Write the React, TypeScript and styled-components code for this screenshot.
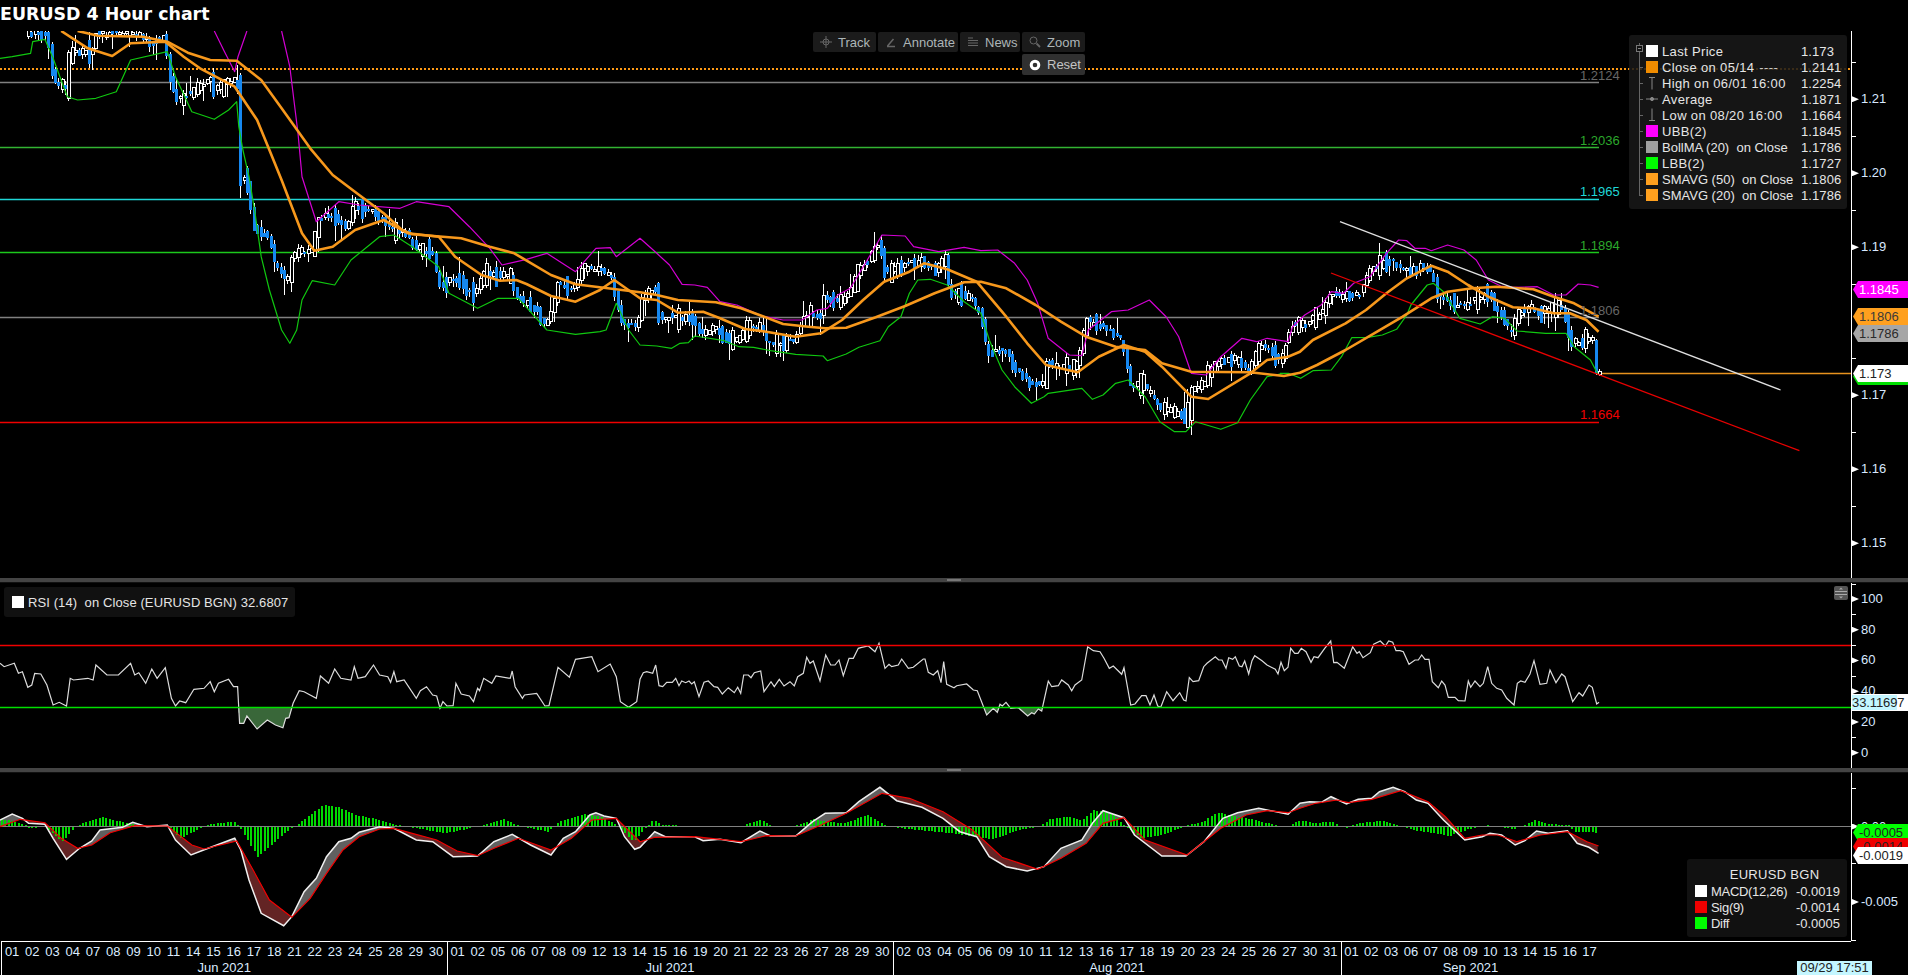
import React from 'react'
import styled, { createGlobalStyle } from 'styled-components'

type Pt = [number, number]

const PANEL_W = 1851
const MAIN_TOP = 31, MAIN_H = 547
const RSI_TOP = 583, RSI_H = 185
const MACD_TOP = 773, MACD_H = 168

// points were read off the picture, each group in its own scale
const trace = (x0: number, sx: number, y0: number, flat: number[]): Pt[] => {
  const out: Pt[] = []
  for (let i = 0; i < flat.length; i += 2) out.push([x0 + flat[i] / sx, y0 + flat[i + 1] / 3])
  return out
}
const at = (pts: Pt[], x: number) => {
  if (x <= pts[0][0]) return pts[0][1]
  for (let i = 1; i < pts.length; i++) {
    if (x <= pts[i][0]) {
      const [ax, ay] = pts[i - 1]
      const [bx, by] = pts[i]
      return bx === ax ? by : ay + ((by - ay) * (x - ax)) / (bx - ax)
    }
  }
  return pts[pts.length - 1][1]
}
const toPath = (pts: Pt[]) => pts.map((p, i) => (i ? 'L' : 'M') + p[0].toFixed(1) + ' ' + p[1].toFixed(1)).join('')
const snap = (y: number) => Math.round(y) + 0.5

const sma20: Pt[] = [
  ...trace(0, 2.45, 0, [150,93,215,145,275,168,320,130,405,125,450,170,490,205,575,260,630,360,660,450,690,540,740,700,770,752,815,740,870,690,940,660,1000,700,1075,710,1115,770,1180,825,1225,842,1265,840,1290,852,1350,888,1410,905,1470,870,1505,840]),
  ...trace(640, 2.376, 230, [0,205,40,210,90,248,150,245,190,265,250,297,300,305,370,320,430,310,480,270,530,210,580,155,640,125,675,100,730,118,800,155,870,260,920,340,965,405,1040,427,1090,380,1150,345,1200,365,1240,410,1310,500,1350,507,1450,430,1490,390,1540,380,1568,365]),
  ...trace(1268, 2.45, 250, [110,270,190,220,240,180,290,130,340,85,400,47,440,65,490,105,540,140,600,172,650,175,700,190,740,190,780,210,810,245]),
]
const sma50: Pt[] = [
  ...trace(0, 2.45, 0, [190,93,240,107,350,110,410,125,460,158,515,180,580,182,640,240,690,325,760,445,815,525,880,585,940,640,985,690,1010,703,1130,715,1200,740,1260,760,1350,825,1410,853]),
  ...trace(640, 2.376, 230, [0,187,40,195,90,210,180,217,240,235,290,258,340,282,400,290,440,295,490,293,560,262,630,228,700,190,770,157,810,155,870,175,940,225,1000,275,1060,320,1130,350,1200,360,1240,400,1310,425,1450,427,1530,438,1568,428]),
  ...trace(1268, 2.45, 250, [120,345,190,300,260,250,330,200,400,145,440,125,500,115,560,110,650,118,700,140,750,160,810,200]),
]
const ubbHead = trace(0, 2.45, 0, [525,93,550,155,575,215,583,170,605,93])
const ubb: Pt[] = [
  ...trace(0, 2.45, 0, [690,93,710,200,730,400,740,530,775,665,830,605,880,615,980,625,1020,605,1100,620,1150,680,1200,745,1230,795,1290,778,1340,760,1410,815,1460,745,1495,743,1510,770]),
  ...trace(640, 2.376, 230, [0,25,40,70,70,105,100,163,130,165,160,172,190,215,230,225,290,258,340,270,385,270,420,240,445,235,470,195,500,175,540,90,575,15,630,18,650,50,710,65,770,52,810,62,850,60,890,100,920,150,945,220,970,325,1020,375,1050,377,1065,300,1120,245,1160,240,1210,210,1250,260,1280,320,1310,430,1345,435,1380,380,1430,325,1465,335,1490,325,1540,335]),
  ...trace(1268, 2.45, 0, [60,980,90,945,130,915,155,875,185,880,210,850,250,830,290,760,320,720,340,722,360,745,385,745,400,752,440,735,480,750,510,780,540,840,570,858,600,862,660,860,700,885,730,885,760,852,790,855,810,862]),
]
const lbb: Pt[] = [
  ...trace(0, 2.45, 0, [0,175,30,170,75,160,80,125,110,118,130,175,165,290,190,300,235,295,285,275,320,180,410,155,430,230,470,335,525,358,560,330,580,305,585,380,595,450,610,530,625,640,640,770,660,870,690,990,710,1030,727,990,740,900,765,842,820,855,860,780,930,710,965,705,1010,740,1075,800,1100,880,1170,925,1220,895,1270,895,1340,990,1410,1003,1470,995,1485,990,1510,910,1540,990,1568,1035]),
  ...trace(640, 2.376, 230, [40,348,75,355,95,340,115,338,130,318,200,332,235,350,270,352,310,362,370,373,435,378,445,392,490,372,520,352,570,332,590,290,620,260,640,190,660,150,690,148,730,165,770,215,810,250,830,330,860,420,890,470,930,520,960,500,970,490,1050,475,1075,508,1100,495,1130,460,1160,450,1200,500,1235,575,1270,605,1297,605,1320,575,1380,598,1420,578,1450,510,1490,440,1530,430]),
  ...trace(1268, 2.45, 250, [30,370,50,370,80,385,110,362,155,360,180,320,205,263,245,262,280,255,315,238,340,195,350,165,390,105,405,100,430,125,440,145,470,205,520,222,550,200,580,205,610,243,680,250,730,250,750,290,790,330,808,372]),
]
const price: Pt[] = [
  ...trace(0, 2.45, 0, [65,100,120,105,135,240,170,270,175,155,230,155,235,105,330,100,375,130,405,110,420,230,435,300,470,280,520,240,530,270,575,240,587,260,590,530,610,540,625,680,665,720,680,800,710,840,720,760,770,750,785,660,820,640,850,690,870,620,915,630,960,690,1000,700,1020,740,1065,760,1080,860,1120,840,1165,880,1190,820,1255,830,1270,890,1320,930,1340,980,1360,915,1370,850,1410,870,1430,800,1500,820,1530,980]),
  ...trace(640, 2.376, 230, [0,280,10,200,40,170,50,260,90,260,130,265,150,320,180,290,210,330,240,330,250,300,290,290,310,340,370,330,395,260,440,260,440,200,480,220,500,190,520,130,550,85,570,40,590,130,640,100,680,95,710,120,730,80,740,190,790,200,815,260,830,370,880,365,890,410,930,460,965,460,970,400,1040,415,1065,270,1100,290,1150,330,1170,470,1200,460,1240,530,1305,565,1310,490,1340,460,1370,400,1420,390,1450,420,1480,340,1530,390,1550,280]),
  ...trace(1268, 2.45, 250, [60,230,100,220,135,190,160,130,205,140,230,130,255,60,300,30,350,70,380,50,400,60,415,120,450,160,490,170,510,150,540,130,570,180,600,250,615,190,650,170,665,200,700,170,730,180,745,280,790,270]),
]

const rsi: Pt[] = [
  ...trace(0, 2.45, 570, [0,280,10,290,35,280,45,310,55,305,68,352,78,345,85,310,100,312,115,345,130,405,145,397,163,408,172,325,180,330,215,325,228,330,235,285,262,315,290,315,320,280,330,315,340,308,357,340,372,297,385,325,405,293,420,385,430,408,440,393,455,398,475,358,500,355,515,335,525,365,535,340,560,328,572,350,582,350,587,460,597,460,605,438,630,477,655,450,675,465,693,473,700,445,708,443,718,400,733,362,745,365,775,385,785,318,805,340,820,297,835,325,860,330,868,290,877,325,895,320,915,285,930,315,950,320,957,337,965,305,972,335,990,330,1020,385,1030,362,1045,350,1060,375,1070,378,1078,415,1085,395,1095,408,1110,407,1117,340,1130,372,1150,378,1160,395,1170,355,1175,362,1185,325,1205,340,1215,318,1250,325,1255,303,1262,350,1280,385,1285,375,1315,370,1335,408,1345,407,1367,292,1395,322,1410,268,1450,260,1465,305,1495,282,1510,320,1520,395,1540,412,1560,395]),
  ...trace(640, 3, 630, [0,148,10,128,20,125,38,130,47,105,57,167,68,170,80,157,97,157,107,145,117,167,125,153,137,158,147,153,155,162,163,155,177,200,192,157,205,153,222,170,233,172,247,192,265,173,283,188,293,172,302,190,311,135,325,135,333,143,343,128,362,123,372,185,393,155,403,170,418,148,432,168,450,155,463,168,473,140,490,130,500,82,510,100,520,93,540,153,557,75,572,105,585,105,597,90,610,137,627,85,640,85,655,55,665,52,685,48,705,65,717,40,735,115,747,103,755,110,775,105,785,87,805,115,820,112,850,87,855,87,865,127,880,135,893,122,903,158,911,95,920,163,942,173,950,167,980,162,1000,180,1012,182,1040,255,1060,235,1072,247,1080,223,1087,228,1098,217,1112,235,1135,233,1163,258,1175,248,1183,252,1195,237,1205,243,1225,153,1235,170,1255,167,1265,150,1285,165,1295,182,1305,165,1325,150,1343,50,1360,62,1380,65,1392,85,1408,115,1420,108,1445,133,1452,113,1472,225,1485,222,1505,197,1518,197,1530,225,1542,195,1553,228,1562,232]),
  ...trace(1162, 3, 630, [0,222,14,185,33,212,53,188,65,210,72,213,82,143,93,155,110,152,125,110,135,100,160,80,170,90,180,90,192,115,200,83,212,88,220,80,232,108,240,110,248,93,260,132,270,92,278,77,300,92,315,105,340,118,348,132,357,97,367,122,378,112,386,55,398,70,408,70,418,55,432,65,447,97,456,80,468,83,488,55,506,33,515,98,525,97,547,115,572,50,585,70,592,65,603,83,625,68,635,43,655,33,670,48,680,33,692,37,702,62]),
  ...trace(1400, 3, 570, [0,242,10,245,27,283,45,270,55,270,65,255,75,268,87,268,97,335,115,353,125,333,135,345,145,382,165,382,175,392,195,393,205,333,212,352,225,333,240,350,250,340,263,290,275,340,290,355,305,360,320,385,342,405,352,340,362,333,375,337,390,312,402,272,420,343,440,340,450,300,468,338,485,312,495,320,518,395,537,368,548,378,567,345,577,352,590,402,597,397]),
]

const macd: Pt[] = [
  ...trace(0, 2.45, 770, [0,150,30,132,55,145,70,160,110,163,130,205,163,268,195,235,225,213,245,180,300,172,325,157,360,170,410,165,430,210,468,255,510,235,575,205,590,240,610,330,640,430,695,467,715,440,745,365,775,325,800,260,830,215,860,205,880,187,930,170,965,175,1020,210,1060,215,1110,260,1170,258,1210,215,1255,193,1300,225,1350,255,1380,205,1410,185,1445,135,1460,128,1480,138,1510,145,1530,200,1555,238]),
  ...trace(640, 2.376, 770, [0,232,35,185,60,200,130,200,150,212,190,208,240,218,285,183,310,198,370,198,410,155,440,130,490,128,520,95,570,52,610,92,670,112,720,145,760,185,800,200,830,260,870,290,920,303,960,290,1000,235,1050,210,1075,160,1100,122,1150,143,1175,195,1240,258,1297,258,1340,215,1385,145,1420,128,1470,115,1540,133]),
  ...trace(1300, 2.579, 770, [0,100,25,95,55,97,80,80,120,102,150,88,185,85,205,65,240,52,270,65,300,90,330,100,370,150,425,210,470,200,490,190,520,195,555,225,580,212,610,183,640,190,690,182,715,220,745,232,770,250]),
]
const signal: Pt[] = [
  ...trace(0, 2.45, 770, [0,170,50,148,110,158,150,205,190,235,225,225,270,188,330,167,410,168,470,225,500,237,580,213,620,300,660,390,715,442,760,385,800,310,840,240,880,200,930,177,965,175,1010,190,1070,210,1120,243,1170,257,1210,235,1270,205,1350,240,1400,205,1450,150,1510,145]),
  ...trace(640, 2.376, 770, [0,215,35,202,130,200,240,215,300,197,370,198,430,165,490,130,575,70,640,85,720,125,790,180,860,262,945,298,1000,265,1060,220,1100,160,1150,143,1200,210,1300,255,1380,175,1440,135,1490,122,1540,128]),
  ...trace(1300, 2.579, 770, [0,115,40,100,95,90,125,98,185,88,260,62,330,95,375,140,425,205,470,195,510,195,560,215,590,205,620,195,690,185,740,215,770,228]),
]
const hist: Pt[] = [
  ...trace(0, 2.45, 770, [0,145,30,155,60,165,70,175,110,170,150,215,180,175,200,160,250,142,300,157,350,167,410,168,440,205,490,175,510,162,570,155,585,170,630,260,700,185,725,165,790,105,830,112,870,135,930,150,970,165,1090,190,1160,172,1180,165,1230,147,1270,168,1340,185,1370,155,1430,132,1470,140,1510,165,1550,215]),
  ...trace(640, 2.376, 770, [0,190,30,150,50,165,130,168,240,168,285,150,310,167,370,167,410,148,440,155,480,160,540,135,580,165,600,172,660,180,740,190,835,208,900,180,950,170,970,148,1010,140,1050,150,1075,120,1120,130,1150,168,1190,205,1240,195,1290,170,1340,152,1370,128,1420,140,1470,153,1530,173]),
  ...trace(1300, 2.579, 770, [0,150,30,160,80,155,105,170,120,175,145,160,210,152,260,168,300,182,385,198,430,178,480,165,550,178,605,150,640,162,690,165,710,187,735,187,770,188]),
]

const seeded = (seed: number) => () => {
  seed = (seed + 0x6d2b79f5) | 0
  let t = Math.imul(seed ^ (seed >>> 15), 1 | seed)
  t = (t + Math.imul(t ^ (t >>> 7), 61 | t)) ^ t
  return ((t ^ (t >>> 14)) >>> 0) / 4294967296
}

interface Candle { x: number; top: number; bottom: number; hi: number; lo: number; down: boolean }

const buildCandles = (): Candle[] => {
  const rnd = seeded(2021)
  const out: Candle[] = []
  const step = 3.37
  for (let x = 27; x < 1592; x += step) {
    const a = at(price, x) + (rnd() - 0.5) * 6
    const b = at(price, x + step) + (rnd() - 0.5) * 6
    const pad = rnd() < 0.3 ? rnd() * 10 : rnd() * 2
    const top = Math.min(a, b) - pad
    const bottom = Math.max(a, b) + pad
    const up = rnd() < 0.2 ? 16 : 5
    const dn = rnd() < 0.2 ? 16 : 5
    out.push({ x, top, bottom: Math.max(bottom, top + 2), hi: top - rnd() * up, lo: bottom + rnd() * dn, down: b > a })
  }
  out.push({ x: 1594.5, top: 340, bottom: 374, hi: 339, lo: 375, down: true })
  out.push({ x: 1598, top: 371, bottom: 374, hi: 369, lo: 376, down: false })
  return out
}

const priceY = (p: number) => 247.3 + (1.19 - p) * 7400
const rsiY = (v: number) => 752.7 - v * 1.537
const ZERO_Y = 826.5

const GlobalStyle = createGlobalStyle`
  html, body {
    margin: 0;
    background: #000;
    font-family: "Liberation Sans", Arial, sans-serif;
    font-size: 13px;
    overflow: hidden;
  }
`
const Page = styled.div`
  width: 1908px;
  height: 975px;
  display: flex;
  flex-direction: column;
  background: #000;
  overflow: hidden;
`
const Title = styled.h1`
  margin: 0;
  height: 31px;
  flex: none;
  font: bold 17.4px/28px "DejaVu Sans", sans-serif;
  color: #fff;
  white-space: nowrap;
`
const Panel = styled.section<{ $h: number }>`
  display: flex;
  flex: none;
  height: ${p => p.$h}px;
`
const Plot = styled.div`
  position: relative;
  width: ${PANEL_W}px;
  flex: none;
  height: 100%;
`
const Drawing = styled.svg`
  display: block;
  width: 100%;
  height: 100%;
`
const Separator = styled.div`
  flex: none;
  height: 5px;
  background: #444;
  display: flex;
  justify-content: center;
  align-items: center;
  border-bottom: 1px solid #111;
  box-sizing: border-box;
`
const Grip = styled.span`
  display: block;
  width: 14px;
  height: 2px;
  background: #777;
`

const AxisColumn = styled.div`
  position: relative;
  flex: 1;
  border-left: 1px solid #fff;
  color: #d8e8ff;
`
const MajorTick = styled.i`
  position: absolute;
  left: 0;
  width: 7px;
  height: 6px;
  margin-top: -3px;
  background: #fff;
  clip-path: polygon(0 0, 100% 50%, 0 100%);
`
const MinorTick = styled.i`
  position: absolute;
  left: 0;
  width: 4px;
  height: 1px;
  background: #fff;
`
const AxisLabel = styled.span`
  position: absolute;
  left: 9px;
  height: 16px;
  margin-top: -8px;
  line-height: 16px;
  white-space: nowrap;
`
const Tag = styled.div<{ $bg: string; $fg: string }>`
  position: absolute;
  left: 1px;
  width: 55px;
  height: 17px;
  box-sizing: border-box;
  padding-left: 6px;
  line-height: 17px;
  background: ${p => p.$bg};
  color: ${p => p.$fg};
  white-space: nowrap;
  overflow: hidden;
  clip-path: polygon(5px 0, 100% 0, 100% 100%, 5px 100%, 0 50%);
`
const RsiTag = styled.div`
  position: absolute;
  left: 0;
  width: 56px;
  height: 17px;
  background: #fff;
  color: #222;
  line-height: 17px;
  white-space: nowrap;
  overflow: hidden;
`
const Highlight = styled.span`
  background: #c4f6ff;
  letter-spacing: -0.1px;
`

const LevelText = styled.span<{ $color: string }>`
  position: absolute;
  left: 1580px;
  width: 39px;
  height: 14px;
  margin-top: -7px;
  line-height: 14px;
  text-align: right;
  color: ${p => p.$color};
`

const Toolbar = styled.div`
  position: absolute;
  left: 813px;
  top: 1px;
  display: flex;
  flex-direction: column;
  align-items: flex-end;
  gap: 2px;
`
const ToolRow = styled.div`
  display: flex;
  gap: 2px;
`
const ToolButton = styled.div<{ $w: number; $active?: boolean }>`
  display: flex;
  align-items: center;
  gap: 6px;
  box-sizing: border-box;
  width: ${p => p.$w}px;
  height: ${p => (p.$active ? 21 : 20)}px;
  padding-left: 7px;
  border-radius: 2px;
  background: ${p => (p.$active ? '#303030' : '#1b1b1b')};
  color: ${p => (p.$active ? '#c4c4c4' : '#adb6b8')};
  white-space: nowrap;
`

const Legend = styled.div`
  position: absolute;
  top: 4px;
  right: 4px;
  width: 218px;
  height: 174px;
  box-sizing: border-box;
  padding-top: 8px;
  border-radius: 3px;
  background: rgba(24, 24, 24, 0.86);
  color: #e6e6e6;
`
const LegendRow = styled.div`
  display: flex;
  align-items: center;
  height: 16px;
`
const TreeCell = styled.span<{ $last?: boolean }>`
  position: relative;
  align-self: stretch;
  width: 17px;
  flex: none;
  &::before {
    content: '';
    position: absolute;
    left: 10px;
    top: 0;
    height: ${p => (p.$last ? 8 : 16)}px;
    width: 1px;
    background: #666;
  }
  &::after {
    content: '';
    position: absolute;
    left: 10px;
    top: 8px;
    width: 4px;
    height: 1px;
    background: #666;
  }
`
const TreeBox = styled.span`
  position: absolute;
  z-index: 1;
  left: 7px;
  top: 2px;
  width: 5px;
  height: 5px;
  border: 1px solid #777;
  background: #111;
  display: flex;
  align-items: center;
  justify-content: center;
  &::after {
    content: '';
    width: 3px;
    height: 1px;
    background: #888;
  }
`
const Swatch = styled.span<{ $color: string }>`
  display: block;
  flex: none;
  width: 12px;
  height: 12px;
  background: ${p => p.$color};
`
const SeriesName = styled.span<{ $tight: boolean }>`
  flex: none;
  width: 139px;
  margin-left: 4px;
  letter-spacing: ${p => (p.$tight ? 0 : 0.35)}px;
  white-space: pre;
`
const SeriesValue = styled.span`
  letter-spacing: 0.1px;
`
const Dashes = styled.span`
  color: #c8c8c8;
  margin-left: 5px;
`
const GlyphBox = styled.svg`
  display: block;
  flex: none;
  width: 12px;
  height: 14px;
`

const RsiLegend = styled.div`
  position: absolute;
  left: 4px;
  top: 4px;
  width: 291px;
  height: 30px;
  display: flex;
  align-items: center;
  gap: 4px;
  box-sizing: border-box;
  padding-left: 8px;
  border-radius: 3px;
  background: #111;
  color: #e4e4e4;
  letter-spacing: 0.1px;
  white-space: pre;
`
const CollapseButton = styled.div`
  position: absolute;
  right: 3px;
  top: 3px;
  width: 14px;
  height: 14px;
  border-radius: 2px;
  background: #555;
`

const MacdLegend = styled.div`
  position: absolute;
  right: 4px;
  top: 86px;
  width: 160px;
  height: 78px;
  box-sizing: border-box;
  padding: 8px 7px 0 8px;
  border-radius: 3px;
  background: #111;
  color: #e6e6e6;
`
const MacdTitle = styled.div`
  height: 16px;
  line-height: 16px;
  text-align: center;
  padding-left: 14px;
  letter-spacing: 0.3px;
`
const MacdRow = styled.div`
  display: flex;
  align-items: center;
  height: 16px;
`
const MacdName = styled.span`
  margin-left: 4px;
  flex: 1;
  letter-spacing: -0.3px;
`

const DateStrip = styled.div`
  position: relative;
  flex: none;
  height: 34px;
  color: #dcecff;
`
const Months = styled.div`
  display: flex;
  width: ${PANEL_W - 1}px;
  height: 100%;
  box-sizing: border-box;
  margin-left: 1px;
  border-top: 1px solid #fff;
`
const Month = styled.div<{ $w: number }>`
  flex: none;
  box-sizing: border-box;
  width: ${p => p.$w}px;
  border-left: 1px solid #fff;
`
const MonthInner = styled.div<{ $w?: number }>`
  width: ${p => (p.$w ? p.$w + 'px' : '100%')};
`
const Days = styled.div`
  display: flex;
  justify-content: space-around;
  height: 19px;
  line-height: 19px;
`
const MonthName = styled.div`
  height: 14px;
  line-height: 14px;
  text-align: center;
`
const Stamp = styled.div`
  position: absolute;
  right: 36px;
  bottom: 0;
  width: 75px;
  height: 14px;
  line-height: 14px;
  text-align: center;
  background: #c4f6ff;
  color: #222;
`

interface AxisProps {
  top: number
  major: { y: number; label: string }[]
  minor: number[]
  children?: React.ReactNode
}
const Axis: React.FC<AxisProps> = ({ top, major, minor, children }) => (
  <AxisColumn>
    {minor.map(y => <MinorTick key={y} style={{ top: y - top }} />)}
    {major.map(m => (
      <React.Fragment key={m.label}>
        <MajorTick style={{ top: m.y - top }} />
        <AxisLabel style={{ top: m.y - top }}>{m.label}</AxisLabel>
      </React.Fragment>
    ))}
    {children}
  </AxisColumn>
)

const levels = [
  { y: 82.5, x2: 1599, color: '#808080', text: '1.2124', tc: '#666', ty: 75.5 },
  { y: 147.5, x2: 1599, color: '#32b432', text: '1.2036', tc: '#2ca82c', ty: 140.5 },
  { y: 199.5, x2: 1599, color: '#1fd6d6', text: '1.1965', tc: '#1fd6d6', ty: 192 },
  { y: 252.5, x2: 1599, color: '#1cc81c', text: '1.1894', tc: '#2ca82c', ty: 245.5 },
  { y: 317.5, x2: 1599, color: '#808080', text: '1.1806', tc: '#666', ty: 310.5 },
  { y: 422.5, x2: 1599, color: '#f00000', text: '1.1664', tc: '#f00000', ty: 415 },
]

const PriceChart: React.FC = () => {
  const candles = React.useMemo(buildCandles, [])
  return (
    <Drawing viewBox={`0 ${MAIN_TOP} ${PANEL_W} ${MAIN_H}`}>
      <line x1={0} x2={PANEL_W} y1={69} y2={69} stroke="#ff9a14" strokeWidth={2} strokeDasharray="2 2" />
      {levels.map(l => (
        <line key={l.text} x1={0} x2={l.x2} y1={l.y} y2={l.y} stroke={l.color} strokeWidth={1.4} />
      ))}
      <line x1={1598} x2={PANEL_W} y1={373.5} y2={373.5} stroke="#e8921e" strokeWidth={1.3} />
      <g shapeRendering="crispEdges">
        {candles.map(c => (
          <g key={c.x}>
            <line x1={Math.round(c.x) + 1.5} x2={Math.round(c.x) + 1.5} y1={c.hi} y2={c.lo} stroke="#fff" />
            {c.down
              ? <rect x={Math.round(c.x)} y={c.top} width={3} height={c.bottom - c.top} fill="#1688f0" />
              : <rect x={Math.round(c.x) + 0.5} y={c.top} width={2.5} height={c.bottom - c.top} fill="#000" stroke="#fff" />}
          </g>
        ))}
      </g>
      <g fill="none" strokeLinejoin="round">
        <path d={toPath(lbb)} stroke="#10c810" strokeWidth={1.2} />
        <path d={toPath(ubbHead)} stroke="#d400d4" strokeWidth={1.2} />
        <path d={toPath(ubb)} stroke="#d400d4" strokeWidth={1.2} />
        <path d={toPath(sma50)} stroke="#f7981c" strokeWidth={2.6} />
        <path d={toPath(sma20)} stroke="#f7981c" strokeWidth={2.6} />
        <line x1={1340} y1={221.7} x2={1780.6} y2={390} stroke="#e0e0e0" strokeWidth={1.3} />
        <line x1={1331} y1={273} x2={1799.4} y2={450.7} stroke="#e80000" strokeWidth={1.3} />
      </g>
    </Drawing>
  )
}

const RsiChart: React.FC = () => {
  const level = snap(rsiY(30))
  let fill = ''
  for (let x = 0; x < 1598; x++) {
    const y = at(rsi, x)
    if (y > level) fill += `M${x} ${level}V${y.toFixed(1)}`
  }
  return (
    <Drawing viewBox={`0 ${RSI_TOP} ${PANEL_W} ${RSI_H}`}>
      <path d={fill} stroke="#4d8a4d" fill="none" />
      <path d={toPath(rsi)} stroke="#dcdcdc" strokeWidth={1.2} fill="none" />
      <line x1={0} x2={PANEL_W} y1={snap(rsiY(70))} y2={snap(rsiY(70))} stroke="#f00000" strokeWidth={1.4} />
      <line x1={0} x2={PANEL_W} y1={level} y2={level} stroke="#00e000" strokeWidth={1.4} />
    </Drawing>
  )
}

const MacdChart: React.FC = () => {
  let above = ''
  let below = ''
  for (let x = 0; x < 1598; x++) {
    const w = at(macd, x)
    const s = at(signal, x)
    const seg = `M${x} ${w.toFixed(1)}V${s.toFixed(1)}`
    if (w < s) above += seg
    else below += seg
  }
  const bars: Pt[] = []
  for (let x = 1; x < 1598; x += 3.37) bars.push([Math.round(x), at(hist, x)])
  return (
    <Drawing viewBox={`0 ${MACD_TOP} ${PANEL_W} ${MACD_H}`}>
      <path d={above} stroke="#808080" fill="none" />
      <path d={below} stroke="#843030" fill="none" />
      <g shapeRendering="crispEdges">
        {bars.map(b => (
          <rect key={b[0]} x={b[0]} y={Math.min(b[1], ZERO_Y)} width={2} height={Math.abs(b[1] - ZERO_Y)} fill="#00d800" />
        ))}
      </g>
      <line x1={0} x2={PANEL_W} y1={ZERO_Y} y2={ZERO_Y} stroke="#808080" />
      <path d={toPath(macd)} stroke="#f0f0f0" strokeWidth={1.5} fill="none" />
      <path d={toPath(signal)} stroke="#f00000" strokeWidth={1.2} fill="none" />
    </Drawing>
  )
}

const ToolIcon: React.FC<{ kind: 'track' | 'annotate' | 'news' | 'zoom' }> = ({ kind }) => (
  <svg width={12} height={12} viewBox="0 0 12 12" fill="none" stroke="#666">
    {kind === 'track' && (
      <>
        <circle cx={6} cy={6} r={3} />
        <path d="M6 0v12M0 6h12" />
      </>
    )}
    {kind === 'annotate' && <path d="M2 10.5h8M2.5 10l6-7" strokeWidth={1.5} />}
    {kind === 'news' && <path d="M1 2h5M1 4.5h10M1 7h10M1 9.5h10" strokeWidth={1.2} />}
    {kind === 'zoom' && (
      <>
        <circle cx={4.5} cy={4.5} r={3.5} />
        <path d="M7.5 7.5l3.5 3.5" strokeWidth={1.8} />
      </>
    )}
  </svg>
)

const Glyph: React.FC<{ kind: 'high' | 'avg' | 'low' }> = ({ kind }) => (
  <GlyphBox viewBox="0 0 12 14" fill="none" stroke="#888">
    {kind === 'high' && <path d="M3 1.5h6M6 1.5v12" />}
    {kind === 'low' && <path d="M3 12.5h6M6 0.5v12" strokeWidth={1} />}
    {kind === 'avg' && (
      <>
        <path d="M0 7h12" />
        <circle cx={6} cy={7} r={1.6} fill="#888" />
      </>
    )}
  </GlyphBox>
)

const legendRows: { name: string; value: string; color?: string; glyph?: 'high' | 'avg' | 'low'; dashes?: boolean }[] = [
  { name: 'Last Price', value: '1.173', color: '#fff' },
  { name: 'Close on 05/14', value: '1.2141', color: '#f08c00', dashes: true },
  { name: 'High on 06/01 16:00', value: '1.2254', glyph: 'high' },
  { name: 'Average', value: '1.1871', glyph: 'avg' },
  { name: 'Low on 08/20 16:00', value: '1.1664', glyph: 'low' },
  { name: 'UBB(2)', value: '1.1845', color: '#ff00ff' },
  { name: 'BollMA (20)  on Close', value: '1.1786', color: '#a0a0a0' },
  { name: 'LBB(2)', value: '1.1727', color: '#00ff00' },
  { name: 'SMAVG (50)  on Close', value: '1.1806', color: '#ffa01e' },
  { name: 'SMAVG (20)  on Close', value: '1.1786', color: '#ffa01e' },
]

const months: { name: string; w: number; inner?: number; days: string[] }[] = [
  { name: 'Jun 2021', w: 445.5, days: '01 02 03 04 07 08 09 10 11 14 15 16 17 18 21 22 23 24 25 28 29 30'.split(' ') },
  { name: 'Jul 2021', w: 446, days: '01 02 05 06 07 08 09 12 13 14 15 16 19 20 21 22 23 26 27 28 29 30'.split(' ') },
  { name: 'Aug 2021', w: 448, days: '02 03 04 05 06 09 10 11 12 13 16 17 18 19 20 23 24 25 26 27 30 31'.split(' ') },
  { name: 'Sep 2021', w: 510, inner: 258, days: '01 02 03 06 07 08 09 10 13 14 15 16 17'.split(' ') },
]

const priceMajor = [1.21, 1.2, 1.19, 1.17, 1.16, 1.15].map(p => ({ y: priceY(p), label: p === 1.2 ? '1.20' : String(p) }))
const priceMinor = [1.205, 1.195, 1.185, 1.175, 1.165, 1.155, 1.215].map(priceY)
const rsiMajor = [100, 80, 60, 40, 20, 0].map(v => ({ y: rsiY(v), label: String(v) }))
const rsiMinor = [110, 90, 70, 50, 30, 10].map(rsiY)

export default function App() {
  return (
    <Page>
      <GlobalStyle />
      <Title>EURUSD 4 Hour chart</Title>

      <Panel $h={MAIN_H}>
        <Plot>
          <PriceChart />
          {levels.map(l => (
            <LevelText key={l.text} $color={l.tc} style={{ top: l.ty - MAIN_TOP }}>{l.text}</LevelText>
          ))}
          <Toolbar>
            <ToolRow>
              <ToolButton $w={63}><ToolIcon kind="track" />Track</ToolButton>
              <ToolButton $w={80}><ToolIcon kind="annotate" />Annotate</ToolButton>
              <ToolButton $w={60}><ToolIcon kind="news" />News</ToolButton>
              <ToolButton $w={63}><ToolIcon kind="zoom" />Zoom</ToolButton>
            </ToolRow>
            <ToolButton $w={63} $active>
              <svg width={12} height={12} viewBox="0 0 12 12" fill="none" stroke="#fff" strokeWidth={3}>
                <circle cx={6} cy={6} r={3.8} />
              </svg>
              Reset
            </ToolButton>
          </Toolbar>
          <Legend>
            {legendRows.map((r, i) => (
              <LegendRow key={r.name}>
                <TreeCell $last={i === legendRows.length - 1}>{i === 0 && <TreeBox />}</TreeCell>
                {r.color ? <Swatch $color={r.color} /> : <Glyph kind={r.glyph!} />}
                <SeriesName $tight={r.name.includes('on Close')}>
                  {r.name}
                  {r.dashes && <Dashes>----</Dashes>}
                </SeriesName>
                <SeriesValue>{r.value}</SeriesValue>
              </LegendRow>
            ))}
          </Legend>
        </Plot>
        <Axis top={MAIN_TOP} major={priceMajor} minor={priceMinor}>
          <Tag $bg="#ff00ff" $fg="#fff" style={{ top: 281 - MAIN_TOP }}>1.1845</Tag>
          <Tag $bg="#ffa01e" $fg="#3a3a3a" style={{ top: 308 - MAIN_TOP }}>1.1806</Tag>
          <Tag $bg="#a6a6a6" $fg="#2a2a2a" style={{ top: 325 - MAIN_TOP }}>1.1786</Tag>
          <Tag $bg="#00e000" $fg="#000" style={{ top: 368 - MAIN_TOP }} />
          <Tag $bg="#fff" $fg="#222" style={{ top: 365 - MAIN_TOP }}>1.173</Tag>
        </Axis>
      </Panel>

      <Separator><Grip /></Separator>

      <Panel $h={RSI_H}>
        <Plot>
          <RsiChart />
          <RsiLegend>
            <Swatch $color="#fff" />
            RSI (14)  on Close (EURUSD BGN) 32.6807
          </RsiLegend>
          <CollapseButton>
            <svg width={14} height={14} viewBox="0 0 14 14" fill="none" stroke="#aaa">
              <path d="M1 5.5h12M1 8.5h12" />
              <path d="M7 1.5l2 2H5zM7 12.5l2-2H5z" fill="#aaa" stroke="none" />
            </svg>
          </CollapseButton>
        </Plot>
        <Axis top={RSI_TOP} major={rsiMajor} minor={rsiMinor}>
          <RsiTag style={{ top: 694 - RSI_TOP }}><Highlight>33.1169</Highlight>7</RsiTag>
        </Axis>
      </Panel>

      <Separator><Grip /></Separator>

      <Panel $h={MACD_H}>
        <Plot>
          <MacdChart />
          <MacdLegend>
            <MacdTitle>EURUSD BGN</MacdTitle>
            <MacdRow><Swatch $color="#fff" /><MacdName>MACD(12,26)</MacdName>-0.0019</MacdRow>
            <MacdRow><Swatch $color="#f00000" /><MacdName>Sig(9)</MacdName>-0.0014</MacdRow>
            <MacdRow><Swatch $color="#00ff00" /><MacdName>Diff</MacdName>-0.0005</MacdRow>
          </MacdLegend>
        </Plot>
        <Axis
          top={MACD_TOP}
          major={[{ y: ZERO_Y, label: '0.00' }, { y: ZERO_Y + 75.4, label: '-0.005' }]}
          minor={[788, 863, 940]}
        >
          <Tag $bg="#00ff00" $fg="#222" style={{ top: 824 - MACD_TOP }}>-0.0005</Tag>
          <Tag $bg="#f00000" $fg="#222" style={{ top: 838 - MACD_TOP }}>-0.0014</Tag>
          <Tag $bg="#fff" $fg="#222" style={{ top: 847 - MACD_TOP }}>-0.0019</Tag>
        </Axis>
      </Panel>

      <DateStrip>
        <Months>
          {months.map(m => (
            <Month key={m.name} $w={m.w}>
              <MonthInner $w={m.inner}>
                <Days>{m.days.map((d, i) => <span key={i}>{d}</span>)}</Days>
                <MonthName>{m.name}</MonthName>
              </MonthInner>
            </Month>
          ))}
        </Months>
        <Stamp>09/29 17:51</Stamp>
      </DateStrip>
    </Page>
  )
}
